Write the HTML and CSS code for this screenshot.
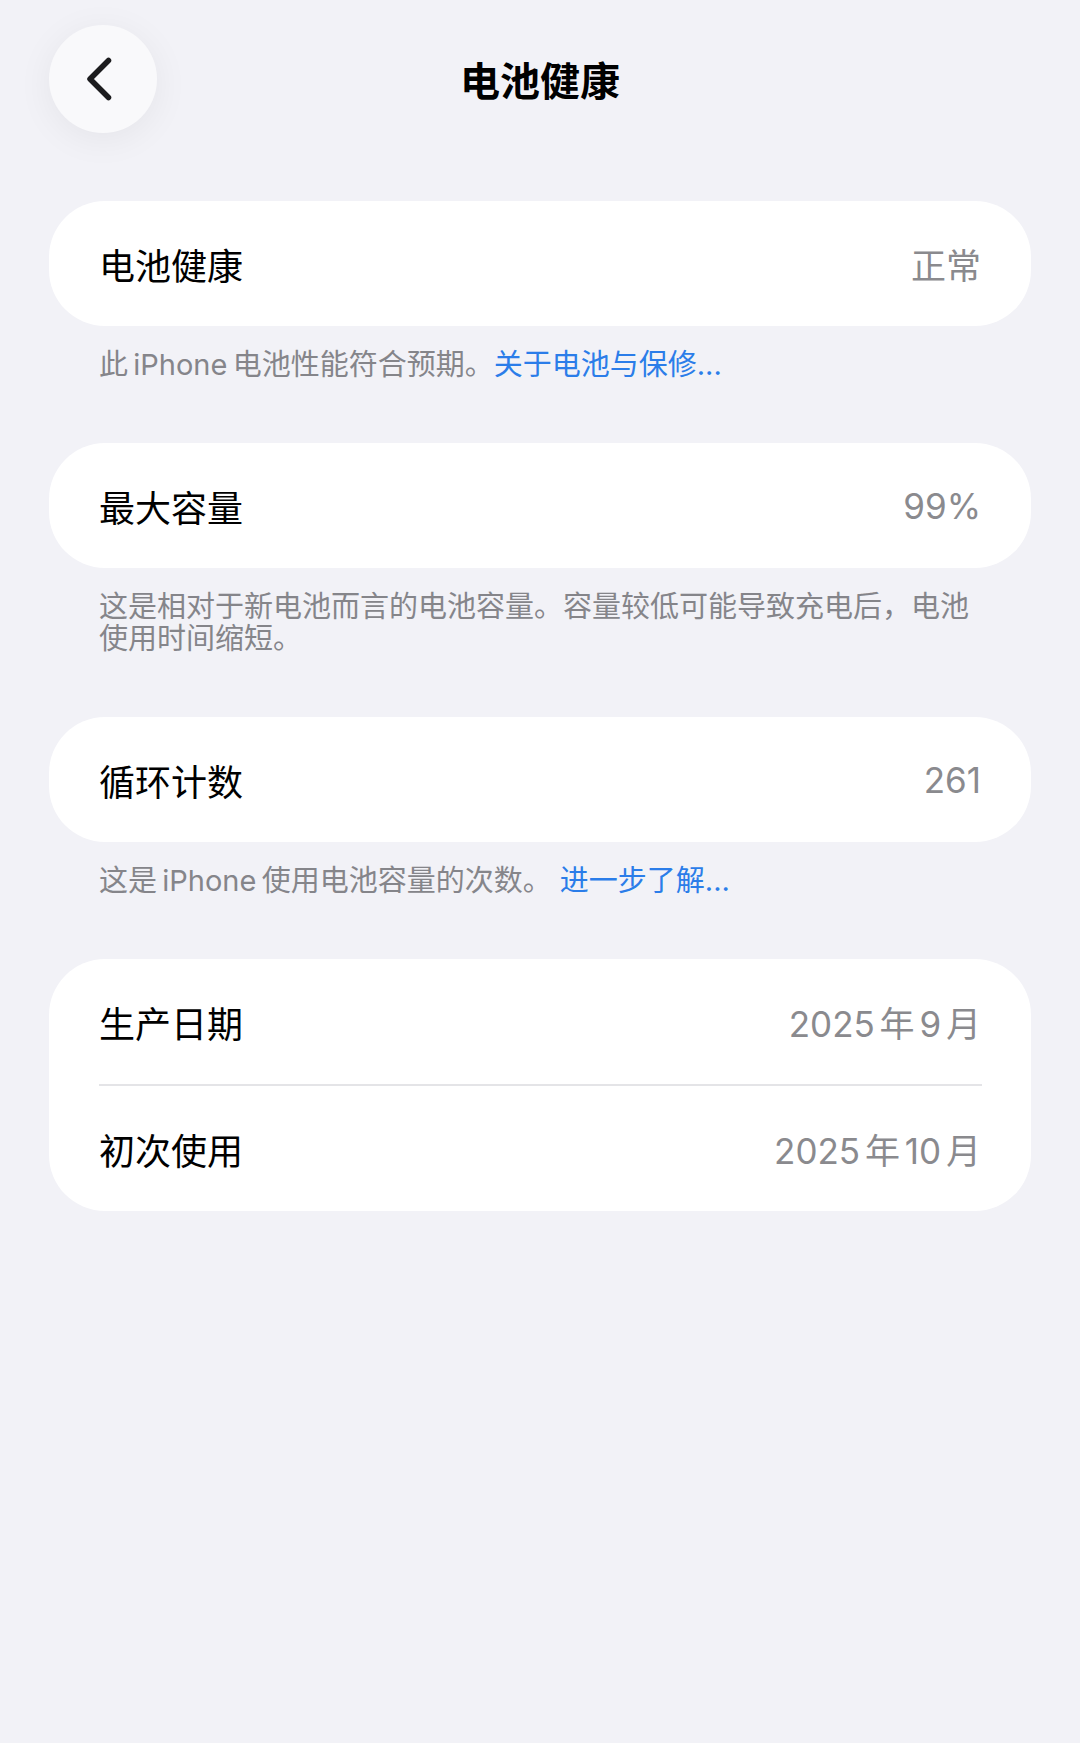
FILE: index.html
```html
<!DOCTYPE html>
<html lang="zh-CN">
<head>
    <meta charset="UTF-8">
    <meta name="viewport" content="width=device-width, initial-scale=1.0">
    <title>电池健康</title>
    <link rel="stylesheet" href="styles.css">
</head>
<body>
    <div class="page">
        <header class="nav-bar">
            <button class="back-btn" aria-label="返回">
                <svg width="108" height="108" viewBox="0 0 108 108">
                    <path d="M59.5 35.5 L41 54 L59.5 72.5" fill="none" stroke="#1c1c1e" stroke-width="5.5" stroke-linecap="round" stroke-linejoin="round"/>
                </svg>
            </button>
            <h1 class="nav-title">电池健康</h1>
            <div class="nav-spacer"></div>
        </header>

        <main class="content">
            <div class="card">
                <div class="row">
                    <span class="row-label">电池健康</span>
                    <span class="row-value">正常</span>
                </div>
            </div>
            <p class="footnote">此&thinsp;iPhone&thinsp;电池性能符合预期。<a class="link" href="#">关于电池与保修...</a></p>

            <div class="card">
                <div class="row">
                    <span class="row-label">最大容量</span>
                    <span class="row-value">99%</span>
                </div>
            </div>
            <p class="footnote">这是相对于新电池而言的电池容量。容量较低可能导致充电后，电池使用时间缩短。</p>

            <div class="card">
                <div class="row">
                    <span class="row-label">循环计数</span>
                    <span class="row-value">261</span>
                </div>
            </div>
            <p class="footnote">这是&thinsp;iPhone&thinsp;使用电池容量的次数。 <a class="link" href="#">进一步了解...</a></p>

            <div class="card">
                <div class="row">
                    <span class="row-label">生产日期</span>
                    <span class="row-value">2025 年 9 月</span>
                </div>
                <div class="separator"></div>
                <div class="row">
                    <span class="row-label">初次使用</span>
                    <span class="row-value">2025 年 10 月</span>
                </div>
            </div>
        </main>
    </div>
</body>
</html>
```

FILE: styles.css
```css
html, body {
    margin: 0;
    padding: 0;
}
body {
    background-color: #f2f2f7;
    font-family: "Inter", "Noto Sans CJK SC", sans-serif;
    color: #000;
    min-height: 1743px;
}
.page {
    width: 1080px;
}
/* Navigation bar */
.nav-bar {
    display: grid;
    grid-template-columns: 108px 1fr 108px;
    align-items: center;
    padding: 25px 49px 0;
    height: 108px;
}
.back-btn {
    width: 108px;
    height: 108px;
    padding: 0;
    border: none;
    border-radius: 50%;
    background-color: #f9f9fb;
    box-shadow: 0 6px 36px rgba(0, 0, 0, 0.06);
    display: flex;
    align-items: center;
    justify-content: center;
    cursor: pointer;
}
.back-btn svg {
    display: block;
}
.nav-title {
    margin: 0;
    text-align: center;
    font-size: 40px;
    font-weight: 700;
    line-height: 1;
    font-family: "Noto Sans CJK SC", sans-serif;
}
/* Content */
.content {
    padding: 68px 49px 0;
}
.card {
    background-color: #fff;
    border-radius: 56px;
    overflow: hidden;
}
.row {
    height: 125px;
    padding: 0 50px;
    display: flex;
    align-items: center;
    justify-content: space-between;
}
.row-label {
    font-size: 36px;
    font-family: "Noto Sans CJK SC", sans-serif;
    color: #000;
}
.row-value {
    font-size: 35px;
    color: #8a8a8e;
    word-spacing: -5px;
}
.separator {
    height: 2px;
    margin: 0 49px 0 50px;
    background-color: #e4e4e7;
}
.footnote {
    margin: 23px 0 62px;
    padding: 0 50px;
    font-size: 29px;
    line-height: 32px;
    color: #85858a;
}
.link {
    color: #2b7de9;
    text-decoration: none;
}
```
